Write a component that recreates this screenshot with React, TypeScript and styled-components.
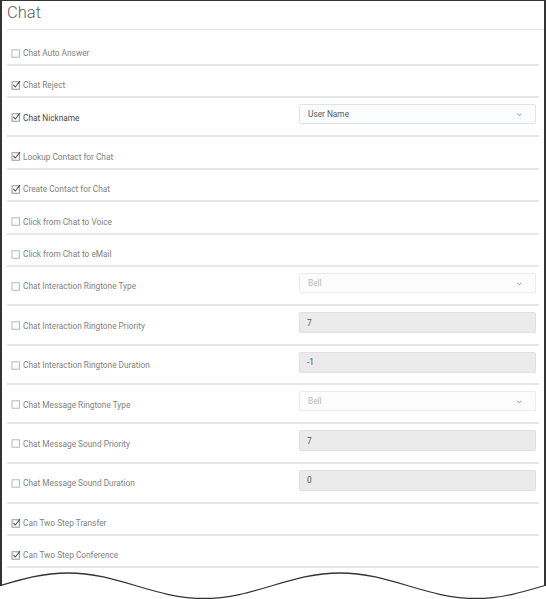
import React from 'react';
import styled, { createGlobalStyle } from 'styled-components';

const GlobalStyle = createGlobalStyle`
	html, body {
		margin: 0;
		padding: 0;
		background: #ffffff;
	}
	body {
		font-family: Roboto, 'Liberation Sans', Arial, sans-serif;
		-webkit-font-smoothing: antialiased;
	}
`;

const Page = styled.div`
	width: 546px;
	display: flex;
	flex-direction: column;
`;

const Sheet = styled.section`
	box-sizing: border-box;
	width: 546px;
	border: 0 solid #333333;
	border-width: 1px 2px 0 2px;
	padding: 0 5px 1px 5px;
	background: #ffffff;
`;

const Header = styled.header`
	margin-right: -5px;
	padding: 1.5px 0 6.5px 0;
	border-bottom: 1px solid #e2e2e2;
`;

const Title = styled.h1`
	margin: 0;
	font-size: 16.5px;
	line-height: 20px;
	font-weight: 300;
	color: #5c5c5c;
`;

const RowList = styled.div`
	display: flex;
	flex-direction: column;
	padding-top: 3.5px;
`;

const Row = styled.div<{ $control?: boolean }>`
	display: grid;
	grid-template-columns: 1fr 237px;
	align-items: start;
	padding: 6px 3px ${(p) => (p.$control ? '10.6px' : '3.9px')} 0;
	border-bottom: 2px solid #e7e7e7;
`;

const Label = styled.label<{ $strong?: boolean }>`
	display: flex;
	align-items: center;
	gap: 2.5px;
	padding: 6.5px 0 0 3.5px;
	font-size: 8.3px;
	line-height: 14px;
	color: ${(p) => (p.$strong ? '#474747' : '#7f7f7f')};
`;

const Box = styled.svg`
	flex: none;
	width: 10px;
	height: 10px;
	margin-top: -1px;
`;

const Select = styled.div<{ $disabled?: boolean }>`
	box-sizing: border-box;
	height: 20px;
	display: flex;
	align-items: center;
	justify-content: space-between;
	padding: 0 13px 0 8px;
	border: 1px solid ${(p) => (p.$disabled ? '#e9ebee' : '#dfe3ea')};
	border-radius: 2px;
	background: ${(p) => (p.$disabled ? '#fcfcfc' : '#fbfcfd')};
	font-size: 8.3px;
	color: ${(p) => (p.$disabled ? '#b8b8b8' : '#5a5a5a')};
`;

const Chevron = styled.svg`
	width: 5px;
	height: 4px;
	margin-top: 2px;
`;

const Field = styled.div`
	box-sizing: border-box;
	height: 21px;
	display: flex;
	align-items: center;
	padding: 0 7px;
	border: 1px solid #e0e0e0;
	border-radius: 2px;
	background: #ebebeb;
	font-size: 8.3px;
	color: #555555;
`;

const TornEdge = styled.svg`
	display: block;
	width: 546px;
	height: 31px;
`;

type Control =
	| { kind: 'select'; value: string; disabled?: boolean }
	| { kind: 'input'; value: string };

type Setting = {
	label: string;
	checked: boolean;
	control?: Control;
};

const settings: Setting[] = [
	{ label: 'Chat Auto Answer', checked: false },
	{ label: 'Chat Reject', checked: true },
	{ label: 'Chat Nickname', checked: true, control: { kind: 'select', value: 'User Name' } },
	{ label: 'Lookup Contact for Chat', checked: true },
	{ label: 'Create Contact for Chat', checked: true },
	{ label: 'Click from Chat to Voice', checked: false },
	{ label: 'Click from Chat to eMail', checked: false },
	{ label: 'Chat Interaction Ringtone Type', checked: false, control: { kind: 'select', value: 'Bell', disabled: true } },
	{ label: 'Chat Interaction Ringtone Priority', checked: false, control: { kind: 'input', value: '7' } },
	{ label: 'Chat Interaction Ringtone Duration', checked: false, control: { kind: 'input', value: '-1' } },
	{ label: 'Chat Message Ringtone Type', checked: false, control: { kind: 'select', value: 'Bell', disabled: true } },
	{ label: 'Chat Message Sound Priority', checked: false, control: { kind: 'input', value: '7' } },
	{ label: 'Chat Message Sound Duration', checked: false, control: { kind: 'input', value: '0' } },
	{ label: 'Can Two Step Transfer', checked: true },
	{ label: 'Can Two Step Conference', checked: true },
];

function CheckBox({ checked }: { checked: boolean }) {
	return (
		<Box viewBox="0 0 10 10">
			<rect
				x="1"
				y="1.8"
				width="7.4"
				height="7.4"
				fill="#ffffff"
				stroke={checked ? '#8a8a8a' : '#b0b0b0'}
				strokeWidth="0.9"
			/>
			{checked && (
				<path
					d="M2.6 5.2 L4.3 7 L8.8 1.4"
					fill="none"
					stroke="#555555"
					strokeWidth="1.1"
					strokeLinecap="round"
					strokeLinejoin="round"
				/>
			)}
		</Box>
	);
}

function SettingControl({ control }: { control: Control }) {
	if (control.kind === 'input') {
		return <Field>{control.value}</Field>;
	}
	return (
		<Select $disabled={control.disabled}>
			{control.value}
			<Chevron viewBox="0 0 5 4">
				<path d="M0.7 0.8 L2.5 2.8 L4.3 0.8" fill="none" stroke="#8391c4" strokeWidth="1" />
			</Chevron>
		</Select>
	);
}

export default function App() {
	return (
		<Page>
			<GlobalStyle />
			<Sheet>
				<Header>
					<Title>Chat</Title>
				</Header>
				<RowList>
					{settings.map((s) => (
						<Row key={s.label} $control={!!s.control}>
							<Label $strong={s.label === 'Chat Nickname'}>
								<CheckBox checked={s.checked} />
								{s.label}
							</Label>
							{s.control && <SettingControl control={s.control} />}
						</Row>
					))}
				</RowList>
			</Sheet>
			{/* torn paper edge at the bottom of the capture */}
			<TornEdge viewBox="0 0 546 31">
				<line x1="1" y1="0" x2="1" y2="17" stroke="#333333" strokeWidth="2" />
				<line x1="545" y1="0" x2="545" y2="17" stroke="#333333" strokeWidth="2" />
				<path
					d="M-68 29.5 C-18 29.5 18 4 68 4 C118 4 154 29.5 204 29.5 C254 29.5 290 4 340 4 C390 4 426 29.5 476 29.5 C526 29.5 562 4 612 4"
					fill="none"
					stroke="#333333"
					strokeWidth="1.3"
				/>
			</TornEdge>
		</Page>
	);
}
